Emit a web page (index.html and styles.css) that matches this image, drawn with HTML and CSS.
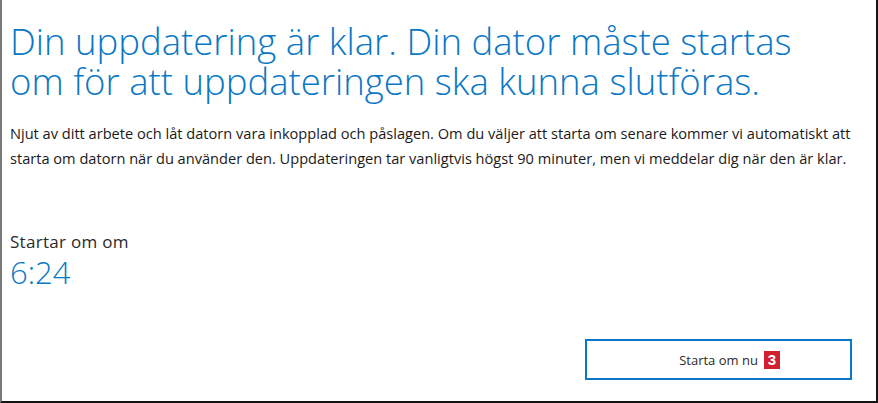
FILE: index.html
```html
<!DOCTYPE html>
<html lang="sv">
<head>
    <meta charset="UTF-8">
    <meta name="viewport" content="width=device-width, initial-scale=1.0">
    <title>Uppdatering klar</title>
    <link rel="stylesheet" href="styles.css">
</head>
<body>
    <div class="update-panel">
        <h1 class="update-title">Din uppdatering är klar. Din dator måste startas om för att uppdateringen ska kunna slutföras.</h1>

        <p class="update-text">Njut av ditt arbete och låt datorn vara inkopplad och påslagen. Om du väljer att starta om senare kommer vi automatiskt att starta om datorn när du använder den. Uppdateringen tar vanligtvis högst 90 minuter, men vi meddelar dig när den är klar.</p>

        <div class="countdown">
            <div class="countdown-label">Startar om om</div>
            <div class="countdown-time">6:24</div>
        </div>

        <div class="actions">
            <button type="button" class="btn-restart"><span class="btn-label">Starta om nu<span class="badge">3</span></span></button>
        </div>
    </div>
</body>
</html>
```

FILE: styles.css
```css
html, body {
    margin: 0;
    padding: 0;
    background-color: #ffffff;
}

body {
    font-family: "Open Sans", "Noto Sans", sans-serif;
}

.update-panel {
    display: flex;
    flex-direction: column;
    box-sizing: border-box;
    height: 403px;
    padding: 0 16px 21px 8px;
    border-left: 2px solid #7a7a7a;
    border-right: 2px solid #141414;
    border-bottom: 2px solid #141414;
}

.update-title {
    margin: 21px 0 0 0;
    max-width: 810px;
    font-size: 36.5px;
    font-weight: 300;
    line-height: 40px;
    color: #0a78c4;
}

.update-text {
    margin: 20px 0 0 0;
    font-size: 14.6px;
    line-height: 25px;
    color: #1a1a1a;
}

.countdown {
    margin-top: 61px;
}

.countdown-label {
    font-size: 17px;
    line-height: 20px;
    color: #2a2a2a;
    letter-spacing: 0.3px;
}

.countdown-time {
    margin-top: 2px;
    font-size: 31px;
    font-weight: 300;
    line-height: 36px;
    color: #0a78c4;
}

.actions {
    margin-top: auto;
    padding-right: 8px;
    display: flex;
    justify-content: flex-end;
}

.btn-restart {
    width: 267px;
    height: 41px;
    box-sizing: border-box;
    border: 2px solid #0a78c8;
    background-color: #ffffff;
    font-family: "Open Sans", "Noto Sans", sans-serif;
    font-size: 13px;
    color: #2a2a2a;
    padding: 0;
    display: flex;
    align-items: center;
    justify-content: center;
    cursor: pointer;
}

.btn-label {
    position: relative;
}

/* Nummer-Markierung neben dem Text */
.badge {
    position: absolute;
    left: 100%;
    top: 50%;
    margin-left: 6px;
    transform: translateY(-50%);
    display: flex;
    align-items: center;
    justify-content: center;
    width: 16px;
    height: 18px;
    background-color: #d01f2f;
    color: #ffffff;
    font-family: "Liberation Sans", Arial, sans-serif;
    font-weight: bold;
    font-size: 15px;
}
```
